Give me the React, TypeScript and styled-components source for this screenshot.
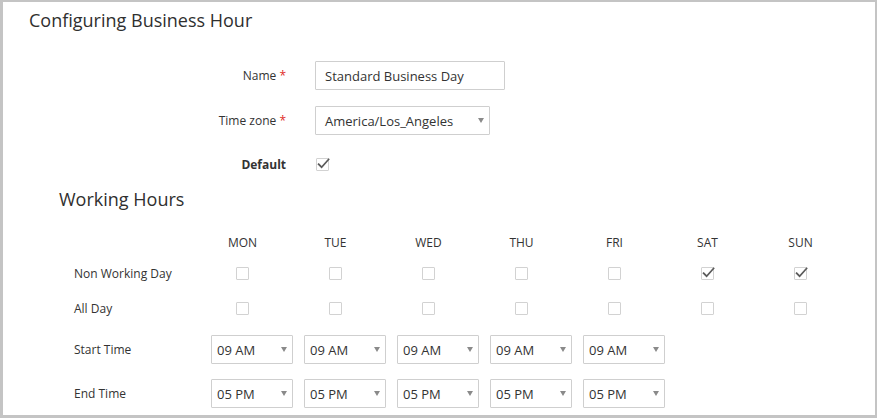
import { Fragment } from "react";
import styled, { createGlobalStyle } from "styled-components";

const GlobalStyle = createGlobalStyle`
  html, body {
    margin: 0;
    padding: 0;
    background: #fff;
  }
  body {
    font-family: "Open Sans", "Noto Sans", "Liberation Sans", sans-serif;
    color: #333;
  }
`;

const days = ["MON", "TUE", "WED", "THU", "FRI", "SAT", "SUN"];
const nonWorking = [false, false, false, false, false, true, true];

function Check({ checked }: { checked?: boolean }) {
  return (
    <Box>
      {checked && (
        <svg width="14" height="14" viewBox="0 0 14 14">
          <path
            d="M2.6 7.2 L5.6 10.2 L12.6 2.4"
            fill="none"
            stroke="#5a5a5a"
            strokeWidth="1.7"
            strokeLinecap="square"
          />
        </svg>
      )}
    </Box>
  );
}

function Dropdown({ value, width, pad = 9 }: { value: string; width: number; pad?: number }) {
  return (
    <SelectBox $width={width} $pad={pad}>
      <span>{value}</span>
      <Caret />
    </SelectBox>
  );
}

function App() {
  return (
    <>
      <GlobalStyle />
      <Panel>
        <Title>Configuring Business Hour</Title>

        <Form>
          <Label>
            Name <Star>*</Star>
          </Label>
          <TextInput defaultValue="Standard Business Day" />

          <Label>
            Time zone <Star>*</Star>
          </Label>
          <Dropdown value="America/Los_Angeles" width={175} />

          <Label $bold $short>
            Default
          </Label>
          <FieldCell $short>
            <Check checked />
          </FieldCell>
        </Form>

        <Section>
          <SubTitle>Working Hours</SubTitle>
          <Schedule>
            <span />
            {days.map((d) => (
              <DayHead key={d}>{d}</DayHead>
            ))}

            <RowLabel>Non Working Day</RowLabel>
            {days.map((d, i) => (
              <CheckCell key={d}>
                <Check checked={nonWorking[i]} />
              </CheckCell>
            ))}

            <RowLabel>All Day</RowLabel>
            {days.map((d) => (
              <CheckCell key={d}>
                <Check />
              </CheckCell>
            ))}

            {[
              ["Start Time", "09 AM"],
              ["End Time", "05 PM"],
            ].map(([label, value]) => (
              <Fragment key={label}>
                <RowLabel>{label}</RowLabel>
                {days.map((d, i) =>
                  nonWorking[i] ? (
                    <span key={d} />
                  ) : (
                    <SelectCell key={d}>
                      <Dropdown value={value} width={82} pad={5} />
                    </SelectCell>
                  )
                )}
              </Fragment>
            ))}
          </Schedule>
        </Section>
      </Panel>
    </>
  );
}

export default App;

const Panel = styled.div`
  box-sizing: border-box;
  width: 877px;
  height: 418px;
  border-style: solid;
  border-color: #c4c4c4;
  border-width: 2px 2px 3px 3px;
  padding-top: 5px;
  overflow: hidden;
`;

const Title = styled.h2`
  margin: 0 0 0 26px;
  font-size: 18px;
  line-height: 26px;
  font-weight: 400;
  color: #2f2f2f;
`;

const Form = styled.div`
  display: grid;
  grid-template-columns: 283px auto;
  grid-auto-rows: 29px;
  column-gap: 29px;
  row-gap: 16px;
  align-items: center;
  justify-items: start;
  margin-top: 28px;
`;

const Label = styled.div<{ $bold?: boolean; $short?: boolean }>`
  justify-self: end;
  font-size: 12px;
  font-weight: ${(p) => (p.$bold ? 700 : 400)};
  color: #333;
  ${(p) => (p.$short ? "height: 27px; line-height: 27px; align-self: start;" : "")}
`;

const Star = styled.span`
  color: #e02b27;
`;

const FieldCell = styled.div<{ $short?: boolean }>`
  display: flex;
  align-items: center;
  height: ${(p) => (p.$short ? "26px" : "29px")};
  align-self: start;
  padding-left: 1px;
`;

const TextInput = styled.input`
  box-sizing: border-box;
  width: 190px;
  height: 29px;
  border: 1px solid #cfcfcf;
  border-radius: 1px;
  padding: 0 9px;
  font-family: inherit;
  font-size: 13px;
  color: #333;
  outline: none;
`;

const SelectBox = styled.div<{ $width: number; $pad: number }>`
  box-sizing: border-box;
  display: flex;
  align-items: center;
  justify-content: space-between;
  width: ${(p) => p.$width}px;
  height: 29px;
  border: 1px solid #cfcfcf;
  border-radius: 1px;
  padding: 0 5px 0 ${(p) => p.$pad}px;
  font-size: 13px;
  color: #333;
  background: #fff;
`;

const Caret = styled.span`
  width: 0;
  height: 0;
  border-left: 3.5px solid transparent;
  border-right: 3.5px solid transparent;
  border-top: 5px solid #8a8a8a;
`;

const Box = styled.span`
  position: relative;
  display: inline-block;
  box-sizing: border-box;
  width: 13px;
  height: 13px;
  border: 1px solid #d2d2d2;
  border-radius: 1px;
  background: #fff;

  svg {
    position: absolute;
    left: -1px;
    top: -2px;
    overflow: visible;
  }
`;

const Section = styled.div`
  margin: 6px 0 0 56px;
`;

const SubTitle = styled.h3`
  margin: 0 0 16px;
  font-size: 18px;
  line-height: 26px;
  font-weight: 400;
  color: #2f2f2f;
`;

const Schedule = styled.div`
  display: grid;
  grid-template-columns: 137px repeat(7, 93px);
  grid-template-rows: 29px 33px 36px 47px 41px;
  align-items: center;
`;

const DayHead = styled.div`
  text-align: center;
  font-size: 12px;
  color: #333;
`;

const RowLabel = styled.div`
  padding-left: 15px;
  font-size: 12px;
  color: #333;
`;

const CheckCell = styled.div`
  display: flex;
  justify-content: center;
`;

const SelectCell = styled.div`
  padding-left: 15px;
`;
